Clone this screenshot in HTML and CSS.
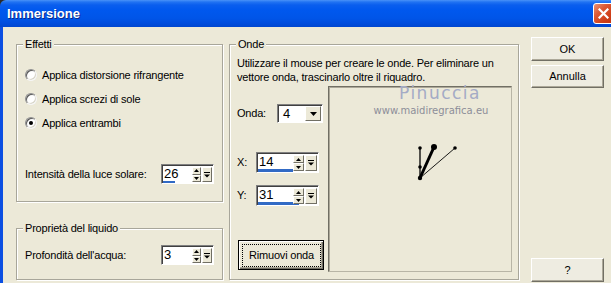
FILE: index.html
```html
<!DOCTYPE html>
<html lang="it">
<head>
<meta charset="utf-8">
<title>Immersione</title>
<link rel="stylesheet" href="styles.css">
</head>
<body>
<div class="window">
  <div class="titlebar">
    <span class="title">Immersione</span>
    <span class="close"><svg width="11" height="11" viewBox="0 0 11 11"><path d="M1.5 1.5 L9.5 9.5 M9.5 1.5 L1.5 9.5" stroke="#fff" stroke-width="2.2" stroke-linecap="square"/></svg></span>
  </div>
  <div class="client">
    <div class="col-left">
      <div class="group g-effetti">
        <span class="legend">Effetti</span>
        <div class="radios">
          <div class="radio-row"><span class="radio"></span><span>Applica distorsione rifrangente</span></div>
          <div class="radio-row"><span class="radio"></span><span>Applica screzi di sole</span></div>
          <div class="radio-row"><span class="radio checked"></span><span>Applica entrambi</span></div>
        </div>
        <div class="field-row r-intensita">
          <span>Intensità della luce solare:</span>
          <div class="spin">
            <div class="val"><span class="num">26</span><span class="bar" style="width:12px"></span></div>
            <div class="arrows"><span class="bev"><svg width="5" height="3" viewBox="0 0 5 3"><polygon points="2.5,0 5,3 0,3" fill="#000"/></svg></span><span class="bev"><svg width="5" height="3" viewBox="0 0 5 3"><polygon points="0,0 5,0 2.5,3" fill="#000"/></svg></span></div>
            <div class="drop bev"><svg width="6" height="6" viewBox="0 0 6 6"><rect x="0" y="0" width="6" height="1" fill="#000"/><polygon points="0,2.5 6,2.5 3,5.5" fill="#000"/></svg></div>
          </div>
        </div>
      </div>
      <div class="group g-liquido">
        <span class="legend">Proprietà del liquido</span>
        <div class="field-row r-profondita">
          <span>Profondità dell'acqua:</span>
          <div class="spin">
            <div class="val"><span class="num">3</span></div>
            <div class="arrows"><span class="bev"><svg width="5" height="3" viewBox="0 0 5 3"><polygon points="2.5,0 5,3 0,3" fill="#000"/></svg></span><span class="bev"><svg width="5" height="3" viewBox="0 0 5 3"><polygon points="0,0 5,0 2.5,3" fill="#000"/></svg></span></div>
            <div class="drop bev"><svg width="6" height="6" viewBox="0 0 6 6"><rect x="0" y="0" width="6" height="1" fill="#000"/><polygon points="0,2.5 6,2.5 3,5.5" fill="#000"/></svg></div>
          </div>
        </div>
      </div>
    </div>

    <div class="group g-onde">
      <span class="legend">Onde</span>
      <p class="hint">Utilizzare il mouse per creare le onde. Per eliminare un<br>vettore onda, trascinarlo oltre il riquadro.</p>
      <div class="onde-body">
        <div class="controls">
          <div class="c-row r-onda">
            <span class="lbl-onda">Onda:</span>
            <div class="combo">
              <span class="num">4</span>
              <span class="combo-btn bev"><svg width="7" height="4" viewBox="0 0 7 4"><polygon points="0,0 7,0 3.5,4" fill="#000"/></svg></span>
            </div>
          </div>
          <div class="c-row r-x">
            <span class="lbl-xy">X:</span>
            <div class="spin big">
              <div class="val"><span class="num">14</span><span class="bar" style="width:35px"></span></div>
              <div class="arrows"><span class="bev"><svg width="5" height="3" viewBox="0 0 5 3"><polygon points="2.5,0 5,3 0,3" fill="#000"/></svg></span><span class="bev"><svg width="5" height="3" viewBox="0 0 5 3"><polygon points="0,0 5,0 2.5,3" fill="#000"/></svg></span></div>
              <div class="drop bev"><svg width="6" height="6" viewBox="0 0 6 6"><rect x="0" y="0" width="6" height="1" fill="#000"/><polygon points="0,2.5 6,2.5 3,5.5" fill="#000"/></svg></div>
            </div>
          </div>
          <div class="c-row r-y">
            <span class="lbl-xy">Y:</span>
            <div class="spin big">
              <div class="val"><span class="num">31</span><span class="bar" style="width:41px"></span></div>
              <div class="arrows"><span class="bev"><svg width="5" height="3" viewBox="0 0 5 3"><polygon points="2.5,0 5,3 0,3" fill="#000"/></svg></span><span class="bev"><svg width="5" height="3" viewBox="0 0 5 3"><polygon points="0,0 5,0 2.5,3" fill="#000"/></svg></span></div>
              <div class="drop bev"><svg width="6" height="6" viewBox="0 0 6 6"><rect x="0" y="0" width="6" height="1" fill="#000"/><polygon points="0,2.5 6,2.5 3,5.5" fill="#000"/></svg></div>
            </div>
          </div>
          <button class="btn-rimuovi" type="button"><span class="focus">Rimuovi onda</span></button>
        </div>
        <div class="canvas">
          <svg width="182" height="184" viewBox="0 0 182 184">
            <line x1="91" y1="91" x2="91" y2="61" stroke="#000" stroke-width="1.3"/>
            <line x1="91" y1="91" x2="126" y2="61" stroke="#000" stroke-width="0.9"/>
            <line x1="91" y1="91" x2="105" y2="60" stroke="#000" stroke-width="3"/>
            <circle cx="91" cy="61" r="1.8" fill="#000"/>
            <circle cx="91" cy="80" r="1.8" fill="#000"/>
            <circle cx="91" cy="91" r="2.2" fill="#000"/>
            <circle cx="105" cy="60" r="3" fill="#000"/>
            <circle cx="126" cy="61" r="1.8" fill="#000"/>
          </svg>
        </div>
      </div>
      <div class="watermark">
        <span class="wm-title">Pinuccia</span>
        <span class="wm-url">www.maidiregrafica.eu</span>
      </div>
    </div>

    <div class="col-buttons">
      <button class="btn btn-ok" type="button">OK</button>
      <button class="btn btn-annulla" type="button">Annulla</button>
      <button class="btn btn-help" type="button">?</button>
    </div>
  </div>
</div>
</body>
</html>
```
FILE: styles.css
```css
html, body {
  margin: 0;
  padding: 0;
  background: #2a2a2a;
}
body {
  width: 611px;
  height: 283px;
  overflow: hidden;
  font: 11px/13px "Liberation Sans", Arial, sans-serif;
  letter-spacing: -0.2px;
  color: #000;
}
.window {
  display: flex;
  flex-direction: column;
  height: 283px;
}
.titlebar {
  height: 27px;
  flex: none;
  display: flex;
  align-items: center;
  justify-content: space-between;
  padding-left: 7px;
  overflow: hidden;
  border-top-left-radius: 6px;
  background: linear-gradient(#4a92f8 0px, #2173f2 2px, #0a5eee 5px, #0058ee 10px, #0055e8 18px, #004dde 23px, #0046d0 27px);
}
.title {
  color: #fff;
  font: bold 13px/16px "Liberation Sans", Arial, sans-serif;
  letter-spacing: 0;
  text-shadow: 1px 1px 0 #0a2a8a;
}
.close {
  width: 21px;
  height: 21px;
  box-sizing: border-box;
  margin-right: -3px;
  border: 1px solid #fff;
  border-radius: 3px;
  background: linear-gradient(135deg, #ea9275 0%, #dd5a35 35%, #cf3f19 70%, #c23512 100%);
  display: flex;
  align-items: center;
  justify-content: center;
}
.close svg { display: block; }

.client {
  flex: 1;
  display: flex;
  align-items: flex-start;
  background: #ECE9D8;
  border-left: 3px solid #0b4fe2;
  padding: 10px 0 0 13px;
}

/* group boxes */
.group {
  position: relative;
  box-sizing: border-box;
  border: 1px solid #a8a69a;
  box-shadow: inset 1px 1px 0 #fff, 1px 1px 0 #fff;
}
.legend {
  position: absolute;
  top: -7px;
  left: 6px;
  padding: 0 2px;
  background: #ECE9D8;
  line-height: 13px;
}
.col-left {
  width: 207px;
  margin-top: 7px;
  display: flex;
  flex-direction: column;
}
.g-effetti { height: 158px; }
.g-liquido { height: 52px; margin-top: 26px; }

.radios { padding: 18px 0 0 8px; }
.radio-row {
  height: 24px;
  display: flex;
  align-items: center;
  gap: 5px;
}
.radio {
  width: 12px;
  height: 12px;
  box-sizing: border-box;
  border-radius: 50%;
  border: 1px solid;
  border-color: #8f8f8f #f5f5f5 #f5f5f5 #8f8f8f;
  box-shadow: inset 1px 1px 0 #5a5a5a, inset -1px -1px 0 #d8d5c8;
  background: #fff;
  display: flex;
  align-items: center;
  justify-content: center;
}
.radio.checked::after {
  content: "";
  width: 4px;
  height: 4px;
  border-radius: 50%;
  background: #000;
}

.field-row {
  display: flex;
  align-items: center;
  justify-content: space-between;
  padding: 0 8px 0 8px;
}
.r-intensita { margin-top: 29px; }
.r-profondita { padding-top: 16px; }

/* spin control */
.spin {
  width: 53px;
  height: 20px;
  box-sizing: border-box;
  display: flex;
  border: 1px solid;
  border-color: #808080 #fff #fff #808080;
  box-shadow: inset 1px 1px 0 #404040;
  background: #fff;
  padding: 1px 1px 0 1px;
}
.spin.big { width: 63px; height: 21px; }
.val {
  flex: 1;
  display: flex;
  flex-direction: column;
  min-width: 0;
}
.num {
  font-size: 13px;
  line-height: 15px;
  letter-spacing: 0;
  padding-left: 1px;
}
.bar {
  margin-top: auto;
  height: 3px;
  background: #316ac5;
}
.bev {
  box-sizing: border-box;
  background: #ECE9D8;
  border: 1px solid;
  border-color: #fff #716f64 #716f64 #fff;
  display: flex;
  align-items: center;
  justify-content: center;
}
.arrows {
  width: 9px;
  display: flex;
  flex-direction: column;
  margin: 1px 1px 1px 1px;
}
.arrows .bev { flex: 1; }
.spin.big .arrows { width: 11px; }
.drop {
  width: 10px;
  margin: 1px 0 1px 0;
}
.spin.big .drop { width: 12px; }
.arrows svg, .drop svg, .combo-btn svg { display: block; }

/* onde */
.g-onde {
  width: 290px;
  height: 236px;
  margin: 7px 0 0 6px;
  padding: 11px 6px 0 7px;
}
.hint {
  margin: 0;
  line-height: 14px;
  white-space: nowrap;
}
.onde-body {
  display: flex;
  margin-top: 2px;
}
.controls {
  width: 92px;
  display: flex;
  flex-direction: column;
  align-items: flex-start;
}
.c-row {
  display: flex;
  align-items: center;
}
.r-onda { margin-top: 18px; }
.r-x { margin-top: 29px; }
.r-y { margin-top: 12px; }
.lbl-onda { width: 40px; }
.lbl-xy { width: 19px; }
.combo {
  width: 46px;
  height: 19px;
  box-sizing: border-box;
  display: flex;
  border: 1px solid;
  border-color: #808080 #fff #fff #808080;
  box-shadow: inset 1px 1px 0 #404040;
  background: #fff;
  padding: 1px 1px 1px 1px;
}
.combo .num { flex: 1; padding-left: 4px; line-height: 16px; }
.combo-btn { width: 16px; }

.btn-rimuovi {
  margin: 34px 0 0 1px;
  width: 86px;
  height: 30px;
  padding: 0;
  display: flex;
  background: #ECE9D8;
  border: 1px solid #000;
  box-shadow: inset 1px 1px 0 #fff, inset -1px -1px 0 #716f64, inset -2px -2px 0 #aca899;
  font: 11px/13px "Liberation Sans", Arial, sans-serif;
  letter-spacing: -0.2px;
  color: #000;
}
.focus {
  flex: 1;
  margin: 3px 2px 2px 3px;
  border: 1px dotted #000;
  display: flex;
  align-items: center;
  justify-content: center;
}
.canvas {
  width: 184px;
  height: 186px;
  box-sizing: border-box;
  border: 1px solid;
  border-color: #716f64 #b8b5a6 #b8b5a6 #716f64;
  box-shadow: inset 1px 1px 0 #aca899;
}
.canvas svg { display: block; }

.watermark {
  position: absolute;
  left: 139px;
  top: 39px;
  width: 124px;
  display: flex;
  flex-direction: column;
  align-items: center;
  pointer-events: none;
}
.wm-title {
  font: 17px/18px "DejaVu Sans", sans-serif;
  letter-spacing: 1.5px;
  color: #a4abc6;
  padding-left: 18px;
}
.wm-url {
  margin-top: 2px;
  font: 10px/13px "DejaVu Sans", sans-serif;
  letter-spacing: 0;
  color: #8d8e98;
  white-space: nowrap;
}

/* right buttons */
.col-buttons {
  width: 73px;
  height: 245px;
  margin-left: 12px;
  display: flex;
  flex-direction: column;
}
.btn {
  box-sizing: border-box;
  width: 73px;
  padding: 0;
  background: #eeece1;
  border: 1px solid;
  border-color: #fff #716f64 #716f64 #fff;
  box-shadow: inset -1px -1px 0 #aca899;
  font: 11px/13px "Liberation Sans", Arial, sans-serif;
  color: #000;
}
.btn-ok { height: 24px; }
.btn-annulla { height: 23px; margin-top: 4px; }
.btn-help { height: 24px; margin-top: auto; }
```
